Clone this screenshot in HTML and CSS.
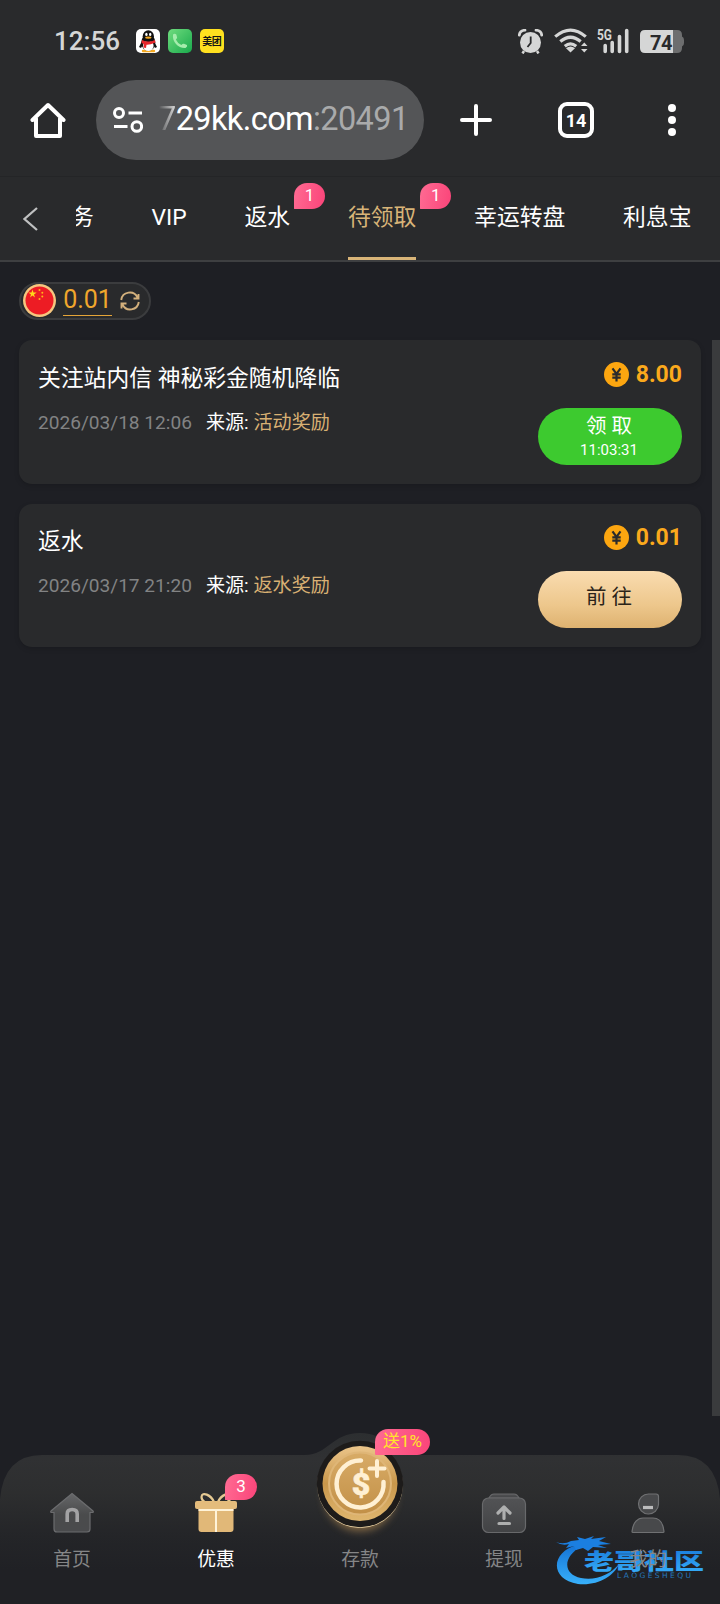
FILE: index.html
```html
<!DOCTYPE html>
<html lang="zh-CN">
<head>
<meta charset="utf-8">
<title>待领取</title>
<link rel="stylesheet" href="styles.css">
</head>
<body>
<header class="status">
  <span class="clock">12:56</span>
  <svg class="app" viewBox="0 0 24 24"><rect width="24" height="24" rx="5" fill="#fff"/><path d="M7 22h11" stroke="#f3a820" stroke-width="2.4" stroke-linecap="round"/><ellipse cx="12.3" cy="13.5" rx="7" ry="8.5" fill="#111"/><path d="M6 12 3 18l2 1 3-5M18 12l3 6-2 1-3-5" fill="#111"/><ellipse cx="12.3" cy="16.8" rx="5.3" ry="5.2" fill="#fff"/><ellipse cx="12.3" cy="7.2" rx="5.6" ry="6" fill="#111"/><ellipse cx="10.4" cy="5.4" rx="1.2" ry="1.6" fill="#fff"/><ellipse cx="14.2" cy="5.4" rx="1.2" ry="1.6" fill="#fff"/><ellipse cx="12.3" cy="8.6" rx="3.2" ry="1.2" fill="#f3a820"/><path d="M6 11q6.500 3 13 0l.5 2.500q-6 2.500-9 2.200L10 19l-2.500-.5.3-3.500-2.300-1z" fill="#e5262b"/></svg>
  <svg class="app" viewBox="0 0 24 24"><defs><linearGradient id="call" x2="1" y2="1"><stop stop-color="#6fdc7e"/><stop offset="1" stop-color="#19a94c"/></linearGradient></defs><rect width="24" height="24" rx="5" fill="url(#call)"/><path d="M5 5.500q1.800-1.500 3.300 0l.8 3q0 1-1.300 2 1.700 3.800 5.600 5.500 1.300-1.600 2.600-1.200l3 1.200q.8 1.500-1.500 3C10.500 19.500 4 13 5 5.500z" fill="#a5ecac"/></svg>
  <svg class="app" viewBox="0 0 24 24"><rect width="24" height="24" rx="5" fill="#ffe01f"/><text x="2.300" y="16" textLength="19.500" class="mt">美团</text></svg>
  <div class="status-right">
    <svg width="25" height="25" viewBox="0 0 25 25"><circle cx="12.500" cy="13.500" r="10.500" fill="#d5d6d6"/><path d="M1.300 6Q2 1.500 7 1.200M23.700 6Q23 1.500 18 1.200" stroke="#d5d6d6" stroke-width="2.800" fill="none" stroke-linecap="round"/><path d="m6 22-1.500 2.500M19 22l1.500 2.500" stroke="#d5d6d6" stroke-width="2.500"/><path d="M12.700 7.500v6.500L9.500 18" stroke="#292a2c" stroke-width="1.800" fill="none"/></svg>
    <svg class="wifi" width="34" height="26" viewBox="0 0 34 26"><g fill="none" stroke="#d5d6d6" stroke-width="3.200"><path d="M1.200 8.600Q16.500-4.500 31.800 8.600"/><path d="M6.300 13.500Q16.500 5 26.700 13.500"/><path d="M10.800 18.300Q16.500 13.500 22.200 18.300"/></g><path d="m16.500 24.500-4.500-4.200q4.500-3.500 9 0z" fill="#d5d6d6"/><path d="m27 18 3.300-3.500L33.500 18zm0 3h6.500l-3.200 3.500z" fill="#d5d6d6"/></svg>
    <svg class="signal" width="32" height="26" viewBox="0 0 32 26"><text x="0" y="11.500" textLength="15" lengthAdjust="spacingAndGlyphs" class="g5">5G</text><path d="M8.200 23.500v-6M15.200 23.500v-9M22.500 23.500V8.500M29.700 23.500V2.500" stroke="#d5d6d6" stroke-width="3.600" stroke-linecap="round"/></svg>
    <svg class="battery" width="44" height="23" viewBox="0 0 44 23"><path d="M33 0h4q5 0 5 5v1.500q2 .5 2 3.500v3q0 3-2 3.500V18q0 5-5 5h-4z" fill="#6d6e6f"/><path d="M5 0h28v23H5q-5 0-5-5V5q0-5 5-5z" fill="#d5d6d6"/><text x="10" y="19.500" textLength="22.500" class="bat">74</text></svg>
  </div>
</header>

<div class="toolbar">
  <svg width="36" height="38" viewBox="0 0 36 38"><path d="M2.500 19 18 4l15.500 15M6 17.500V35h24V17.500" fill="none" stroke="#fff" stroke-width="4" stroke-linejoin="round" stroke-linecap="round"/></svg>
  <div class="omnibox">
    <svg width="30" height="26" viewBox="0 0 30 26" fill="none" stroke="#fff" stroke-width="3"><circle cx="6" cy="6" r="4.500"/><path d="M15.500 6H29M1 19.500h13.500"/><circle cx="23.800" cy="19.500" r="4.800"/></svg>
    <div class="url"><span class="fade">7</span>29kk.com<span class="port">:20491</span></div>
  </div>
  <svg class="plus" width="32" height="32" viewBox="0 0 32 32"><path d="M16 2v28M2 16h28" stroke="#fff" stroke-width="4" stroke-linecap="round"/></svg>
  <div class="tabcount">14</div>
  <svg class="dots" width="8" height="32" viewBox="0 0 8 32" fill="#fff"><circle cx="4" cy="4" r="4"/><circle cx="4" cy="16" r="4"/><circle cx="4" cy="28" r="4"/></svg>
</div>

<nav class="tabs">
  <svg class="back" width="15" height="24" viewBox="0 0 15 24"><path d="M14 1 1.500 12 14 23" fill="none" stroke="#bfc0c1" stroke-width="2.200"/></svg>
  <div class="tablist">
    <a class="tab cut">务</a>
    <a class="tab">VIP</a>
    <a class="tab">返水<i class="badge">1</i></a>
    <a class="tab active">待领取<i class="badge">1</i></a>
    <a class="tab">幸运转盘</a>
    <a class="tab">利息宝</a>
  </div>
</nav>

<main class="content">
  <div class="balance">
    <svg class="flag" width="33" height="33" viewBox="0 0 33 33"><circle cx="16.500" cy="16.500" r="16.500" fill="#f6c67f"/><circle cx="16.500" cy="16.500" r="14" fill="#ed1c24"/><path d="m9.500 5.500 1 3h3.200L11 10.400l1 3.100-2.500-1.900L7 13.500l1-3.100L5.300 8.500h3.200z" fill="#ffd91a"/><g fill="#ffb51a"><circle cx="16.500" cy="6" r="1"/><circle cx="19.300" cy="8.800" r="1"/><circle cx="19.300" cy="12.500" r="1"/><circle cx="16.500" cy="15" r="1"/></g></svg>
    <span class="sum">0.01</span>
    <svg class="refresh" width="20" height="20" viewBox="0 0 20 20" fill="none" stroke="#d3b07c" stroke-width="1.900"><path d="M1.200 9a8.600 8.600 0 0 1 16.300-2.500M18.500 3v4.500h-5M18.800 11a8.600 8.600 0 0 1-16.300 2.500M1.500 17.500v-5h5"/></svg>
  </div>

  <section class="card">
    <div class="info">
      <h2>关注站内信 神秘彩金随机降临</h2>
      <p><time>2026/03/18 12:06</time>来源: <b>活动奖励</b></p>
    </div>
    <div class="side">
      <div class="amount"><svg width="25" height="25" viewBox="0 0 25 25"><circle cx="12.500" cy="12.500" r="12.500" fill="#fca610"/><path d="m8.500 6.300 4 5.500 4-5.500M12.500 12v7.500M8.300 12.300h8.400M8.300 15.700h8.400" fill="none" stroke="#292a2c" stroke-width="2.200"/></svg>8.00</div>
      <button class="btn claim"><span>领 取</span><small>11:03:31</small></button>
    </div>
  </section>

  <section class="card second">
    <div class="info">
      <h2>返水</h2>
      <p><time>2026/03/17 21:20</time>来源: <b>返水奖励</b></p>
    </div>
    <div class="side">
      <div class="amount"><svg width="25" height="25" viewBox="0 0 25 25"><circle cx="12.500" cy="12.500" r="12.500" fill="#fca610"/><path d="m8.500 6.300 4 5.500 4-5.500M12.500 12v7.500M8.300 12.300h8.400M8.300 15.700h8.400" fill="none" stroke="#292a2c" stroke-width="2.200"/></svg>0.01</div>
      <button class="btn go"><span>前 往</span></button>
    </div>
  </section>
  <div class="scrollbar"></div>
</main>

<footer class="dock">
  <svg class="dock-bg" width="720" height="171" viewBox="0 0 720 171"><defs><linearGradient id="dk" x2="0" y2="1"><stop stop-color="#2c2e30"/><stop offset=".15" stop-color="#303133"/><stop offset=".35" stop-color="#2d2e2f"/><stop offset=".6" stop-color="#242528"/><stop offset=".8" stop-color="#202125"/><stop offset="1" stop-color="#202125"/></linearGradient></defs><path d="M0 171V66Q4 22 42 22H305C328 22 332 0 360 0S392 22 415 22H678Q716 22 720 66V171z" fill="url(#dk)"/></svg>
  <svg class="watermark" width="160" height="56" viewBox="0 0 160 56"><defs><linearGradient id="wm" x2="0" y2="1"><stop stop-color="#1473d6"/><stop offset="1" stop-color="#38b0fa"/></linearGradient></defs><path d="M24 12C-2 19-4 46 25 51c20 2 36-8 41-20-9 11-24 17-38 14C10 41 9 24 29 13z" fill="url(#wm)"/><path d="M3 9q8 3 15-1l8-1-2-3 8 2 9-3-3 3 15-2-7 4 12 3-13 1 9 3-14-1-5 4-5-3-7 2-2-4-8 2 3-4q-7 2-13-2z" fill="#1b7fe0"/><text x="31" y="36" textLength="120" lengthAdjust="spacingAndGlyphs" class="wm-main">老哥社区</text><text x="64" y="45" textLength="74" lengthAdjust="spacing" class="wm-sub">LAOGESHEQU</text></svg>
  <a class="item">
    <svg width="46" height="42" viewBox="0 0 46 42"><defs><linearGradient id="hs" x2="0" y2="1"><stop stop-color="#666769"/><stop offset=".55" stop-color="#4a4b4c"/><stop offset="1" stop-color="#4a4b4d"/></linearGradient></defs><path d="M23 1.500 44 19q1 1.500-1 1.500h-2V37q0 3-3 3H8q-3 0-3-3V20.500H3q-2 0-1-1.500z" fill="url(#hs)" stroke="#6b6c6e" stroke-width="1.200"/><path d="M18.200 30V22q0-4.500 5-4.500t5 4.500v8" fill="none" stroke="#a3a3a4" stroke-width="3.600"/></svg>
    <span>首页</span>
  </a>
  <a class="item on">
    <svg width="46" height="42" viewBox="0 0 46 42"><path d="M21 10C18 3 9-1 8.500 5q0 3 3 5M25 10c3-7 12-11 12.500-5q0 3-3 5" fill="none" stroke="#e5c992" stroke-width="2.200"/><path d="M5.500 16h35v21q0 3-3 3h-29q-3 0-3-3z" fill="#e1b878"/><rect x="2" y="9" width="42" height="8" rx="2" fill="#e4bc7c"/><path d="M5.500 18h35M23 18v22" stroke="#fff3d8" stroke-width="2"/></svg>
    <i class="badge three">3</i>
    <span>优惠</span>
  </a>
  <a class="item"><span>存款</span>
    <svg class="coin" width="104" height="108" viewBox="0 0 104 108"><defs><linearGradient id="gd" x2="0" y2="1"><stop stop-color="#ebc58a"/><stop offset=".5" stop-color="#c9974b"/><stop offset="1" stop-color="#dfb66f"/></linearGradient><linearGradient id="gi" x2="0" y2="1"><stop stop-color="#d8ab66"/><stop offset="1" stop-color="#c29047"/></linearGradient><filter id="bl" x="-20%" y="-20%" width="140%" height="140%"><feGaussianBlur stdDeviation="4"/></filter></defs><ellipse cx="52" cy="60" rx="36" ry="37" fill="#a8834f" opacity=".75" filter="url(#bl)"/><circle cx="52" cy="51.200" r="42.800" fill="#efd6a7"/><circle cx="52" cy="50" r="43.200" fill="#1d1b1a"/><circle cx="52" cy="49.500" r="37.500" fill="url(#gd)"/><circle cx="52" cy="49.500" r="31" fill="url(#gi)" stroke="#dfb677" stroke-width="2"/><path d="M53 26.500A23.500 23.500 0 1 0 75.500 48" fill="none" stroke="#fff0d3" stroke-width="4.500" stroke-linecap="round"/><path d="M69 27v15M61.500 34.500h15" stroke="#fff0d3" stroke-width="4" stroke-linecap="round"/><text x="53" y="60.500" text-anchor="middle" class="dollar">$</text></svg>
    <i class="badge promo">送1%</i>
  </a>
  <a class="item">
    <svg width="46" height="42" viewBox="0 0 46 42"><defs><linearGradient id="wd" x2="0" y2="1"><stop stop-color="#525355"/><stop offset="1" stop-color="#424345"/></linearGradient></defs><g fill="url(#wd)" stroke="#68696b" stroke-width="1.200"><path d="M8 6q2-4 5-4h20q3 0 5 4z"/><rect x="1.500" y="6" width="43" height="34.500" rx="6"/></g><path d="M23 26.500V16M17 21 23 15l6 6M18 31.500h10.500" fill="none" stroke="#aeafaf" stroke-width="3.200" stroke-linecap="round" stroke-linejoin="round"/></svg>
    <span>提现</span>
  </a>
  <a class="item">
    <svg width="46" height="42" viewBox="0 0 46 42"><g fill="#48494b" stroke="#707173" stroke-width="1.200"><path d="M23.500 2H31q2.500 0 2.500 2.500v8a10 10 0 1 1-10-10.500z"/><path d="M7 39.500C8 30 13 26 18 26h10c6 0 10 4 11 13.500q0 1-1 1H8q-1 0-1-1z"/></g><path d="M18 15.500h10" stroke="#bcbcbd" stroke-width="3.200"/></svg>
    <span>我的</span>
  </a>
</footer>
</body>
</html>
```

FILE: styles.css
```css
* { box-sizing: border-box; }
body {
  margin: 0;
  width: 720px;
  height: 1604px;
  display: flex;
  flex-direction: column;
  overflow: hidden;
  background: #1e1f24;
  color: #fff;
  font-family: Roboto, "Noto Sans CJK SC", sans-serif;
}
svg { display: block; flex: none; }
i { font-style: normal; }

/* phone status bar */
.status {
  height: 80px;
  flex: none;
  display: flex;
  align-items: center;
  gap: 8px;
  padding: 2px 36px 0 54px;
  background: #292a2c;
}
.clock { width: 74px; font-size: 26px; font-weight: 500; color: #d5d6d6; line-height: 30px; }
.app { width: 24px; height: 24px; }
.mt { font: 700 10px "Noto Sans CJK SC", sans-serif; fill: #151515; }
.status-right { margin-left: auto; display: flex; align-items: center; }
.wifi { margin-left: 11px; }
.signal { margin-left: 9px; }
.battery { margin-left: 11px; }
.g5 { font: 700 15px Roboto, sans-serif; fill: #d5d6d6; }
.bat { font: 700 20px Roboto, sans-serif; fill: #292a2c; }

/* browser toolbar */
.toolbar {
  height: 97px;
  flex: none;
  display: flex;
  align-items: center;
  padding: 0 44px 17px 30px;
  background: #292a2c;
  border-bottom: 1px solid #242527;
}
.omnibox {
  width: 328px;
  height: 80px;
  margin-left: 30px;
  padding-left: 17px;
  border-radius: 40px;
  background: #545557;
  display: flex;
  align-items: center;
}
.url { margin: -2px 0 0 15px; font-size: 32.5px; line-height: 40px; letter-spacing: -0.6px; white-space: nowrap; }
.port { color: #a9aaab; }
.fade {
  background: linear-gradient(90deg, #545557 5%, #ddd);
  -webkit-background-clip: text;
  background-clip: text;
  color: transparent;
}
.plus { margin-left: 36px; }
.tabcount {
  width: 36px;
  height: 36px;
  margin-left: 66px;
  border: 4px solid #fff;
  border-radius: 9px;
  font-size: 18px;
  font-weight: 700;
  line-height: 29px;
  text-align: center;
}
.dots { margin-left: auto; }

/* section tabs */
.tabs {
  height: 85px;
  flex: none;
  display: flex;
  padding-left: 23px;
  background: #292a2c;
  border-bottom: 2px solid #3e3f41;
}
.back { margin-top: 30px; }
.tablist { margin-left: 38px; flex: 1; display: flex; gap: 57.8px; overflow: hidden; }
.tab {
  position: relative;
  flex: none;
  height: 83px;
  font-size: 22.8px;
  line-height: 82px;
  white-space: nowrap;
}
.cut { margin-left: -5px; }
.active { color: #d8b478; border-bottom: 3px solid #d8b478; }
.badge {
  position: absolute;
  left: calc(100% + 4px);
  top: 6px;
  width: 31px;
  height: 26px;
  border-radius: 15px 15px 15px 1px;
  background: linear-gradient(100deg, #ff6b93, #fa4479);
  color: #fff;
  font-size: 17px;
  line-height: 25px;
  text-align: center;
}

/* content */
.content { position: relative; flex: 1; padding: 20px 19px 0; }
.balance {
  width: 132px;
  height: 38px;
  display: flex;
  align-items: center;
  border: 2px solid #3b3c3e;
  border-radius: 19px;
  background: #292a2c;
  padding: 0 0 1px 2px;
}
.sum {
  width: 49px;
  height: 29px;
  margin: 1px 0 0 7px;
  border-bottom: 1px solid #e5a538;
  font-size: 25px;
  line-height: 26px;
  text-align: center;
  color: #f0a72c;
}
.refresh { margin-left: 8px; }
.card {
  width: 682px;
  height: 144px;
  margin-top: 20px;
  padding: 23px 19px 0;
  display: flex;
  justify-content: space-between;
  border-radius: 13px;
  background: #292a2c;
  box-shadow: 0 2px 5px rgba(0, 0, 0, .15);
}
.second { height: 143px; padding-top: 22px; }
.card h2 { margin: 0; font-size: 22.8px; font-weight: 400; line-height: 32px; }
.card p { margin: 14px 0 0; font-size: 19.1px; line-height: 28px; }
.card time { margin-right: 14px; color: #828384; }
.card b { font-weight: 400; color: #d8b073; }
.side { display: flex; flex-direction: column; align-items: flex-end; margin-top: -1px; }
.amount {
  height: 25px;
  display: flex;
  align-items: center;
  gap: 7px;
  font-size: 23px;
  line-height: 23px;
  font-weight: 700;
  color: #fba91c;
}
.btn {
  width: 144px;
  height: 57px;
  margin-top: 21px;
  padding: 0;
  border: 0;
  border-radius: 29px;
  display: flex;
  flex-direction: column;
  align-items: center;
  font-family: inherit;
  font-size: 20.5px;
  color: #fff;
}
.btn span { line-height: 24px; margin: 6px 2px 0 0; }
.btn small { font-size: 15px; line-height: 20px; margin: 2px 2px 0 0; }
.claim { background: #3dca2f; }
.go { background: linear-gradient(#fadcb0, #edc78c 60%, #deb270); color: #2b2419; }
.go span { margin-top: 14px; }
.scrollbar { position: absolute; right: 0; top: 78px; width: 8px; height: 1076px; background: #3a3b3d; }

/* bottom dock */
.dock { position: relative; height: 149px; flex: none; display: flex; }
.dock-bg { position: absolute; left: 0; top: -22px; }
.item {
  position: relative;
  width: 144px;
  height: 149px;
  display: flex;
  flex-direction: column;
  align-items: center;
  justify-content: flex-end;
  padding-bottom: 30px;
  font-size: 18.8px;
  color: #858687;
}
.item > svg:not(.coin) { margin-bottom: 12px; }
.item span { line-height: 28px; }
.on { color: #fff; }
.three { left: 81px; top: 19px; width: 32px; }
.coin { position: absolute; left: 20px; top: -21px; }
.dollar { font: 900 32px Roboto, sans-serif; fill: #fff0d3; stroke: #fff0d3; stroke-width: .6; }
.promo {
  left: 87px;
  top: -26px;
  width: 55px;
  color: #ffe52a;
  font-size: 17px;
  font-weight: 400;
  border-radius: 13px 13px 13px 1px;
  line-height: 24px;
}
.watermark { position: absolute; left: 553px; top: 78px; }
.wm-main { font: 900 22px "Noto Sans CJK SC", sans-serif; fill: url(#wm); }
.wm-sub { font: 400 7.5px "DejaVu Sans", sans-serif; fill: #2679bd; }
```
